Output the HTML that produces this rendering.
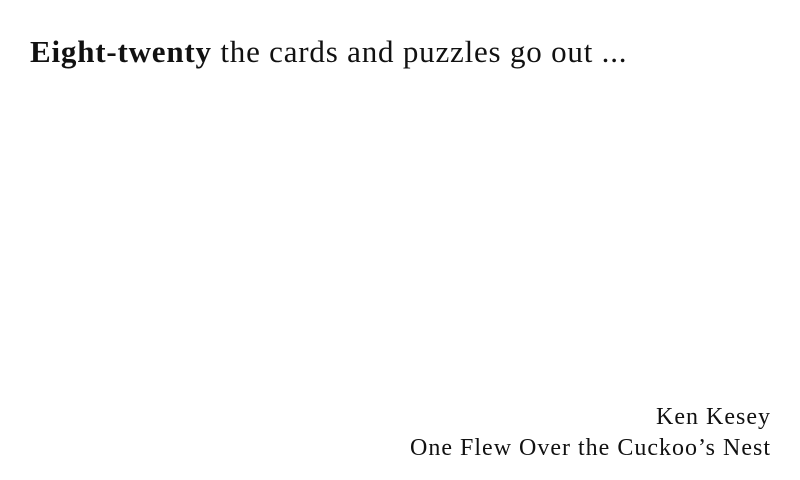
<!DOCTYPE html>
<html><head><meta charset="utf-8"><style>
html,body{margin:0;padding:0;background:#fff;}
body{width:800px;height:480px;position:relative;overflow:hidden;font-family:"Liberation Serif",serif;color:#111;}
.h{position:absolute;left:30px;top:34px;font-size:31px;letter-spacing:0.8px;white-space:nowrap;}
.h b{font-weight:bold;}
.a{position:absolute;right:29px;top:402px;font-size:24px;letter-spacing:1px;text-align:right;line-height:31px;white-space:nowrap;}
</style></head><body>
<div class="h"><b>Eight-twenty</b> the cards and puzzles go out ...</div>
<div class="a">Ken Kesey<br>One Flew Over the Cuckoo’s Nest</div>
</body></html>
